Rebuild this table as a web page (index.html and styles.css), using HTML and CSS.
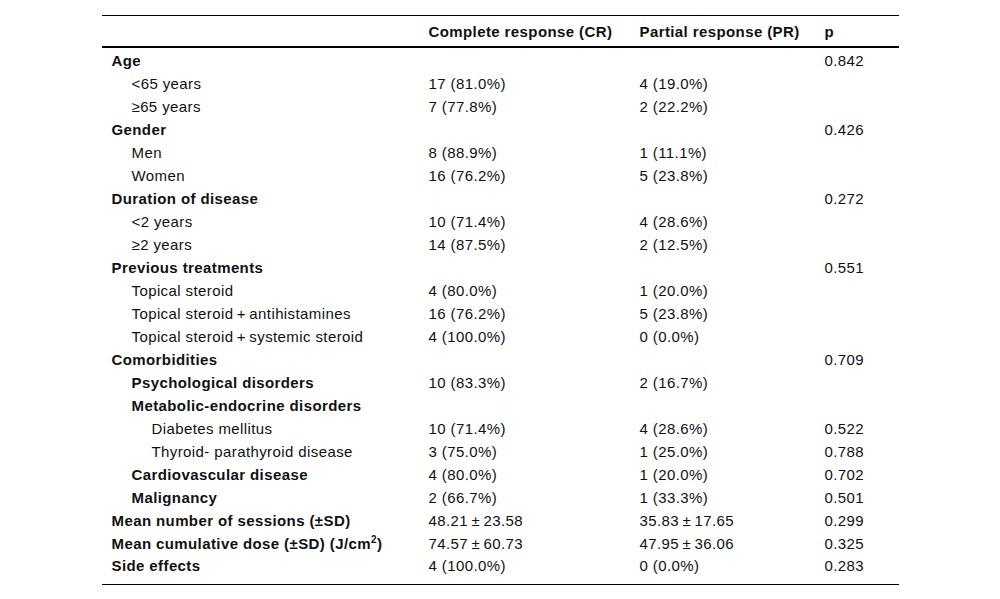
FILE: index.html
```html
<!DOCTYPE html>
<html>
<head>
<meta charset="utf-8">
<link rel="stylesheet" href="styles.css">
</head>
<body>
<table class="results">
  <colgroup>
    <col class="c-label"><col class="c-cr"><col class="c-pr"><col class="c-p">
  </colgroup>
  <thead>
    <tr><th></th><th>Complete response (CR)</th><th>Partial response (PR)</th><th>p</th></tr>
  </thead>
  <tbody>
    <tr><td class="b">Age</td><td></td><td></td><td>0.842</td></tr>
    <tr><td class="i1">&lt;65 years</td><td>17 (81.0%)</td><td>4 (19.0%)</td><td></td></tr>
    <tr><td class="i1">≥65 years</td><td>7 (77.8%)</td><td>2 (22.2%)</td><td></td></tr>
    <tr><td class="b">Gender</td><td></td><td></td><td>0.426</td></tr>
    <tr><td class="i1">Men</td><td>8 (88.9%)</td><td>1 (11.1%)</td><td></td></tr>
    <tr><td class="i1">Women</td><td>16 (76.2%)</td><td>5 (23.8%)</td><td></td></tr>
    <tr><td class="b">Duration of disease</td><td></td><td></td><td>0.272</td></tr>
    <tr><td class="i1">&lt;2 years</td><td>10 (71.4%)</td><td>4 (28.6%)</td><td></td></tr>
    <tr><td class="i1">≥2 years</td><td>14 (87.5%)</td><td>2 (12.5%)</td><td></td></tr>
    <tr><td class="b">Previous treatments</td><td></td><td></td><td>0.551</td></tr>
    <tr><td class="i1">Topical steroid</td><td>4 (80.0%)</td><td>1 (20.0%)</td><td></td></tr>
    <tr><td class="i1">Topical steroid&thinsp;+&thinsp;antihistamines</td><td>16 (76.2%)</td><td>5 (23.8%)</td><td></td></tr>
    <tr><td class="i1">Topical steroid&thinsp;+&thinsp;systemic steroid</td><td>4 (100.0%)</td><td>0 (0.0%)</td><td></td></tr>
    <tr><td class="b">Comorbidities</td><td></td><td></td><td>0.709</td></tr>
    <tr><td class="b i1">Psychological disorders</td><td>10 (83.3%)</td><td>2 (16.7%)</td><td></td></tr>
    <tr><td class="b i1">Metabolic-endocrine disorders</td><td></td><td></td><td></td></tr>
    <tr><td class="i2">Diabetes mellitus</td><td>10 (71.4%)</td><td>4 (28.6%)</td><td>0.522</td></tr>
    <tr><td class="i2">Thyroid- parathyroid disease</td><td>3 (75.0%)</td><td>1 (25.0%)</td><td>0.788</td></tr>
    <tr><td class="b i1">Cardiovascular disease</td><td>4 (80.0%)</td><td>1 (20.0%)</td><td>0.702</td></tr>
    <tr><td class="b i1">Malignancy</td><td>2 (66.7%)</td><td>1 (33.3%)</td><td>0.501</td></tr>
    <tr><td class="b">Mean number of sessions (±SD)</td><td>48.21&thinsp;±&thinsp;23.58</td><td>35.83&thinsp;±&thinsp;17.65</td><td>0.299</td></tr>
    <tr><td class="b">Mean cumulative dose (±SD) (J/cm<sup>2</sup>)</td><td>74.57&thinsp;±&thinsp;60.73</td><td>47.95&thinsp;±&thinsp;36.06</td><td>0.325</td></tr>
    <tr class="last"><td class="b">Side effects</td><td>4 (100.0%)</td><td>0 (0.0%)</td><td>0.283</td></tr>
  </tbody>
</table>
</body>
</html>
```
FILE: styles.css
```css
html, body {
  margin: 0;
  padding: 0;
  background: #ffffff;
}
body {
  font-family: "Liberation Sans", Arial, sans-serif;
  font-size: 15px;
  letter-spacing: 0.4px;
  color: #111111;
}
.results {
  width: 797px;
  margin: 15px auto 0;
  border-collapse: collapse;
  border-top: 1px solid #000;
  border-bottom: 1px solid #000;
}
.c-label { width: 317px; }
.c-cr { width: 211px; }
.c-pr { width: 185px; }
.c-p { width: 84px; }
.results th {
  text-align: left;
  font-weight: bold;
  height: 30px;
  padding: 0 0 0 10px;
  border-bottom: 2px solid #000;
  vertical-align: middle;
}
.results td {
  height: 23px;
  padding: 0 0 0 10px;
  vertical-align: middle;
  white-space: nowrap;
}
.results tbody tr:first-child td { padding-top: 1px; }
.results tr.last td { height: 27px; vertical-align: top; padding-top: 2px; }
.b { font-weight: bold; }
.results td.i1 { padding-left: 30px; }
.results td.i2 { padding-left: 50px; }
sup {
  font-size: 10px;
  line-height: 0;
  vertical-align: 6px;
}
```
